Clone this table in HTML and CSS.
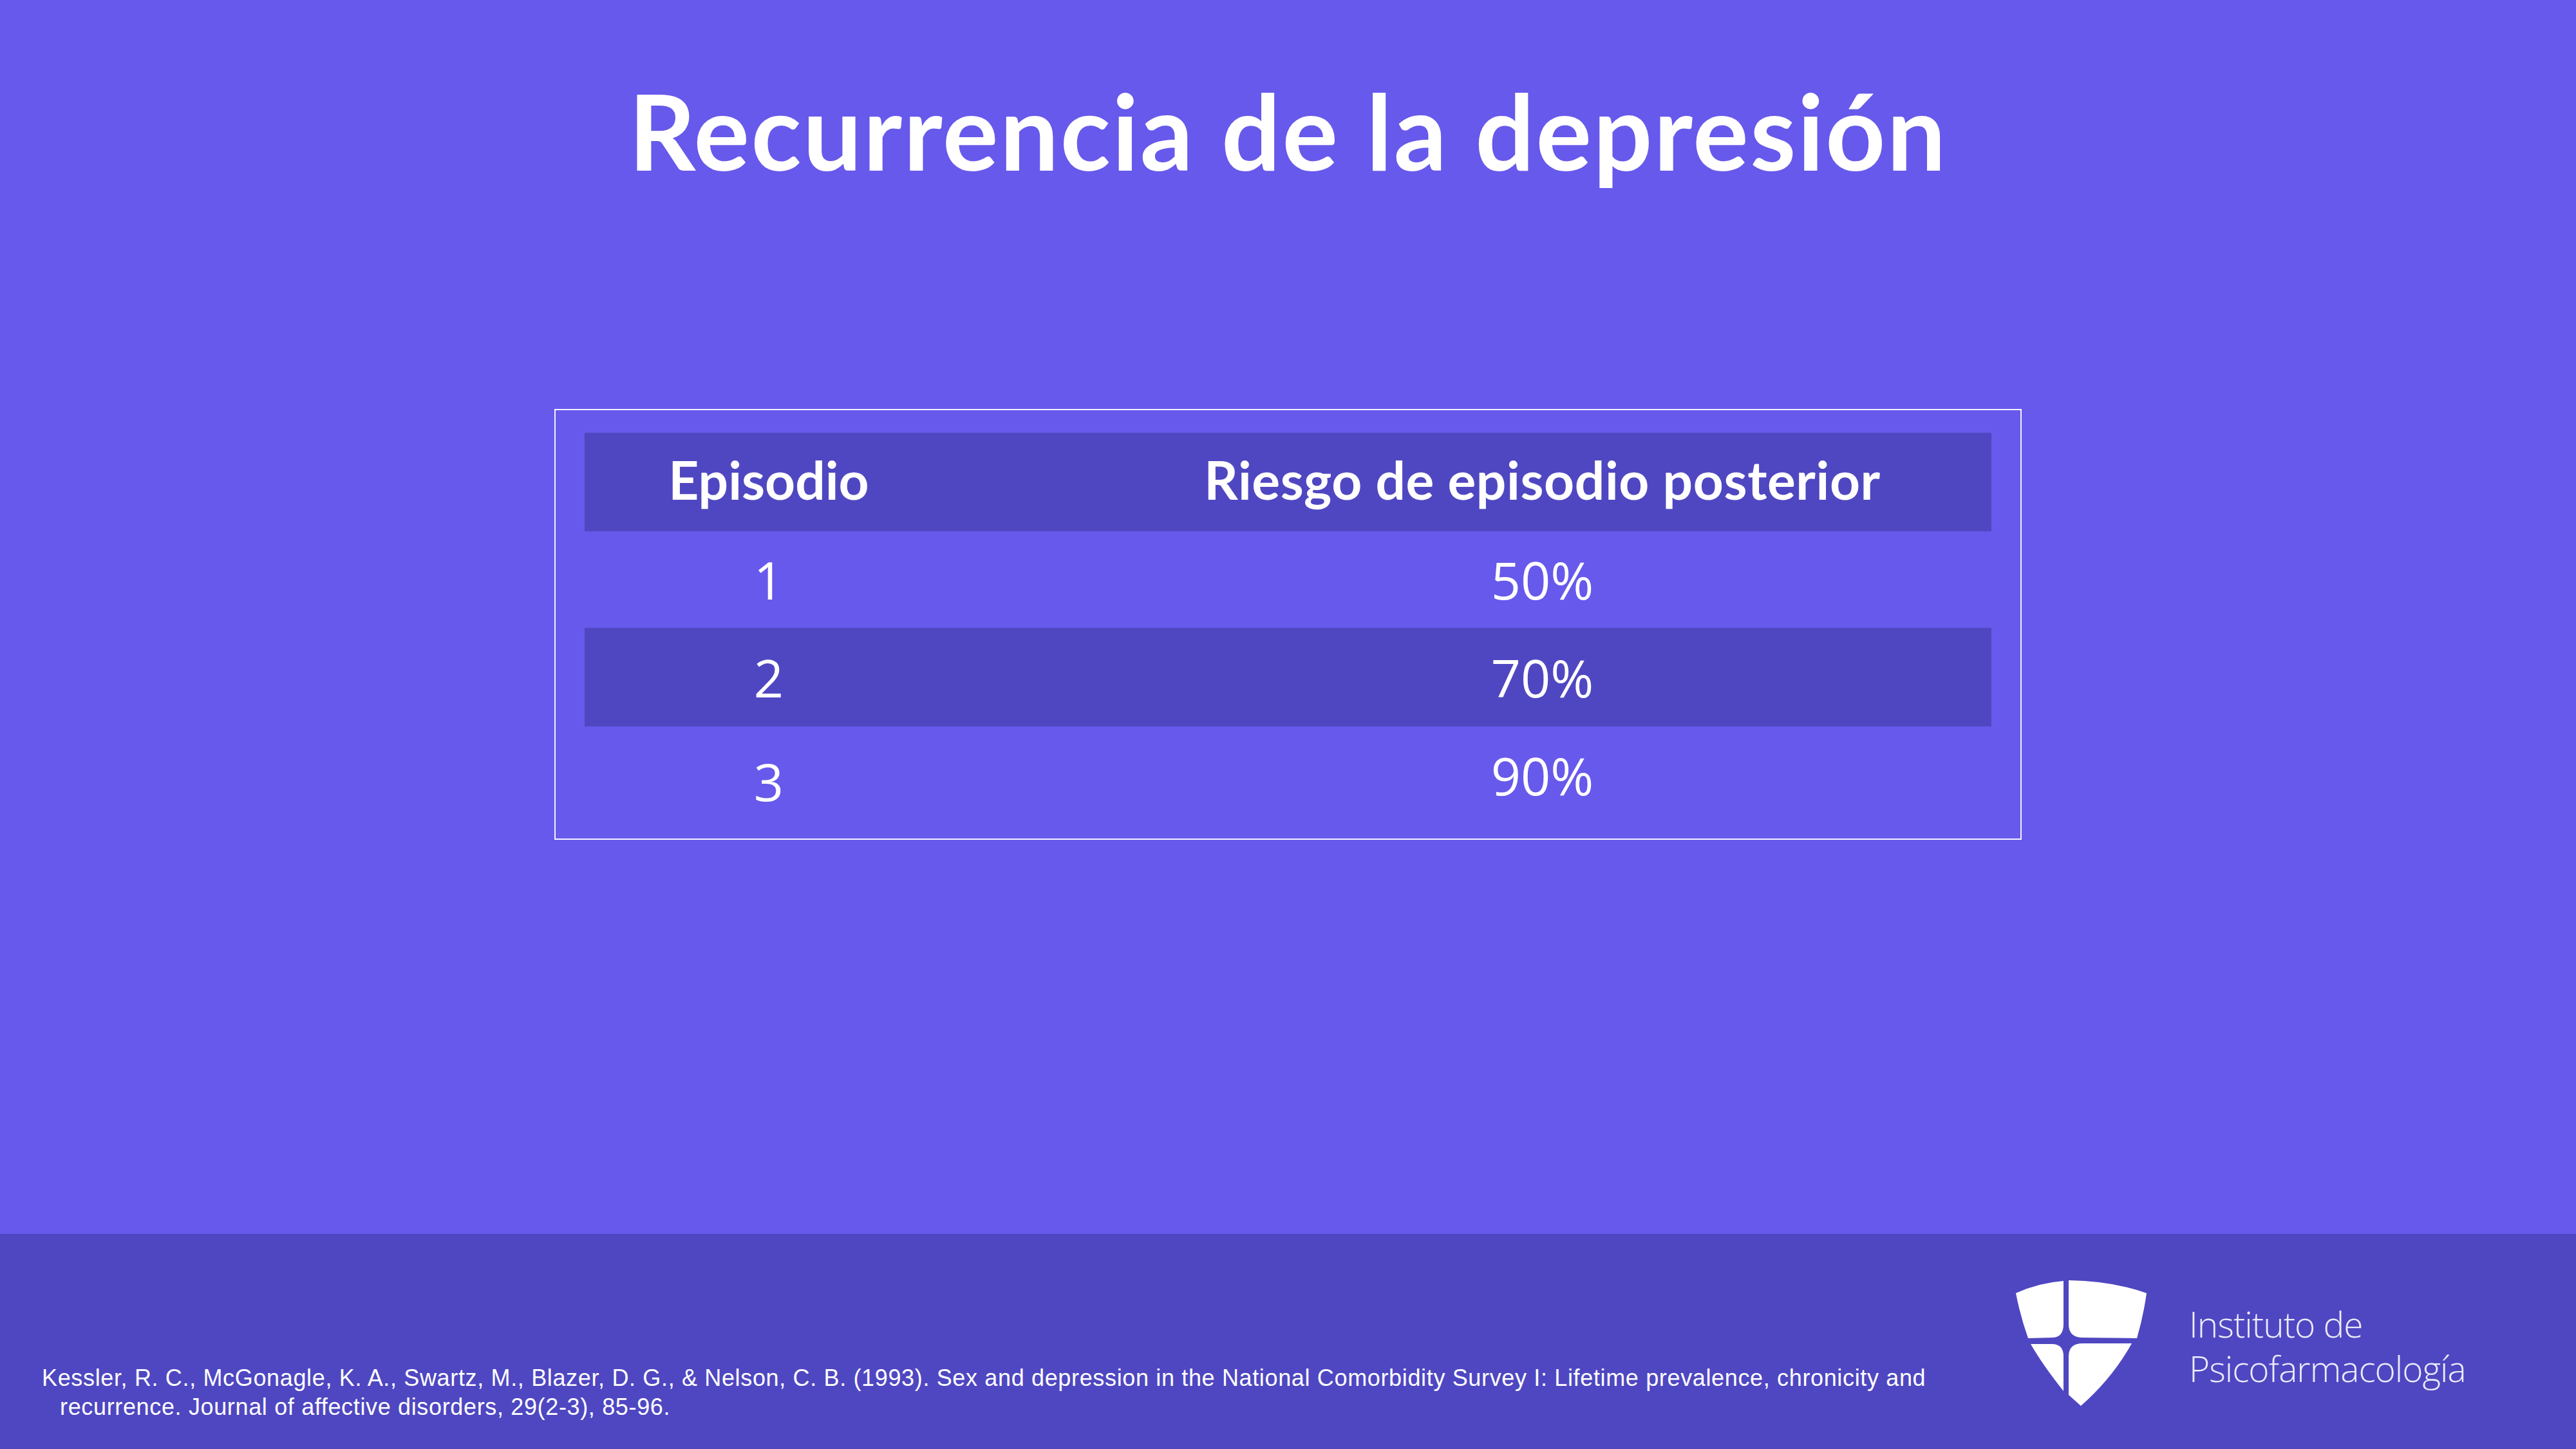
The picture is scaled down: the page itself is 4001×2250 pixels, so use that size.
FILE: index.html
```
<!DOCTYPE html>
<html lang="es">
<head>
<meta charset="utf-8">
<title>Recurrencia de la depresión</title>
<link rel="stylesheet" href="styles.css">
</head>
<body>
<div class="slide">
  <main class="main">
    <h1 class="title">Recurrencia de la depresión</h1>
    <div class="table-frame">
      <div class="table">
        <div class="row head">
          <div class="c1">Episodio</div>
          <div class="c2">Riesgo de episodio posterior</div>
        </div>
        <div class="row r1">
          <div class="c1">1</div>
          <div class="c2">50%</div>
        </div>
        <div class="row r2 dark">
          <div class="c1">2</div>
          <div class="c2">70%</div>
        </div>
        <div class="row r3">
          <div class="c1 shift">3</div>
          <div class="c2">90%</div>
        </div>
      </div>
    </div>
  </main>
  <footer class="footer">
    <p class="cite">Kessler, R. C., McGonagle, K. A., Swartz, M., Blazer, D. G., &amp; Nelson, C. B. (1993). Sex and depression in the National Comorbidity Survey I: Lifetime prevalence, chronicity and<br>recurrence. Journal of affective disorders, 29(2-3), 85-96.</p>
    <div class="logo">
      <svg class="shield" viewBox="0 0 203 195" width="203" height="195" aria-hidden="true">
        <path fill="#fff" d="M0,20 Q35,4 74,1 L74,68 Q74,89 56,89 L19,90 Q7,56 0,20 Z"/>
        <path fill="#fff" d="M82,0 Q150,1 203,20 Q198,56 188,90 L104,89 Q82,89 82,68 Z"/>
        <path fill="#fff" d="M23,99 L56,99 Q74,99 74,118 L74,172 Q42,132 23,99 Z"/>
        <path fill="#fff" d="M180,98 Q150,152 101,195 L82,178 L82,118 Q82,98 104,98 Z"/>
      </svg>
      <div class="logo-text">Instituto de<br>Psicofarmacología</div>
    </div>
  </footer>
</div>
</body>
</html>
```
FILE: styles.css
```
* { box-sizing: border-box; }
html, body { margin: 0; padding: 0; }
body {
  width: 4001px;
  height: 2250px;
  overflow: hidden;
  background: #6759eb;
  color: #fff;
  font-family: "Lato", "Open Sans", sans-serif;
}
.slide {
  width: 4001px;
  height: 2250px;
  display: flex;
  flex-direction: column;
}
.main {
  height: 1916px;
  background: #6759eb;
  padding-top: 106px;
  display: flex;
  flex-direction: column;
  align-items: center;
}
.title {
  margin: 0;
  font-family: "Lato", sans-serif;
  font-weight: 700;
  font-size: 162px;
  line-height: 1.2;
  letter-spacing: 2.4px;
  color: #fff;
  text-align: center;
}
.table-frame {
  margin-top: 335px;
  width: 2279px;
  border: 2px solid #f4f3ff;
  padding: 35px 45px 22px 45px;
}
.table {
  display: flex;
  flex-direction: column;
}
.row {
  display: grid;
  grid-template-columns: 572px 1fr;
  align-items: center;
  height: 152px;
  font-family: "Open Sans", sans-serif;
  font-weight: 400;
  font-size: 81px;
  line-height: 1.362;
}
.row.head {
  height: 153px;
  background: #4f47c1;
  font-family: "Lato", sans-serif;
  font-weight: 700;
  font-size: 82px;
  line-height: 1.2;
  padding-bottom: 10px;
}
.row.head .c2 { letter-spacing: 0.6px; }
.row.r1 { height: 150px; }
.row.r2 { height: 153px; }
.row.dark { background: #4f47c1; }
.c1 { text-align: center; }
.c2 { text-align: center; padding-left: 218px; }
.shift { padding-top: 18px; }
.footer {
  height: 334px;
  background: #4f47c1;
  display: grid;
  grid-template-columns: 3066px auto;
  padding-left: 65px;
  align-items: start;
}
.cite {
  margin: 201px 0 0 0;
  font-family: "Liberation Sans", Arial, sans-serif;
  font-size: 36px;
  line-height: 45px;
  letter-spacing: 0.65px;
  white-space: nowrap;
  padding-left: 28px;
  text-indent: -28px;
  color: #fff;
}
.logo {
  margin-top: 72px;
  display: flex;
  align-items: flex-start;
  gap: 66px;
}
.shield { display: block; flex: none; }
.logo-text {
  margin-top: 33px;
  font-family: "Open Sans", sans-serif;
  font-weight: 300;
  font-size: 55px;
  line-height: 69px;
  letter-spacing: -1px;
  color: #ecebfa;
  white-space: nowrap;
}
```
